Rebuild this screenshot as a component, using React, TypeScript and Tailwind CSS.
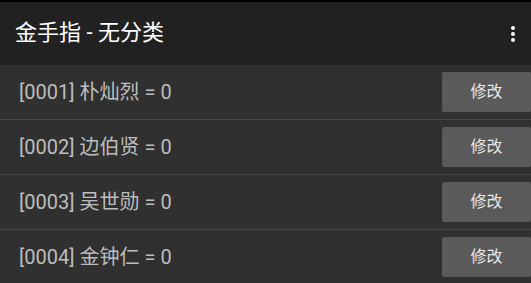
const rows = [
  { id: "0001", name: "朴灿烈", value: 0 },
  { id: "0002", name: "边伯贤", value: 0 },
  { id: "0003", name: "吴世勋", value: 0 },
  { id: "0004", name: "金钟仁", value: 0 },
];

const font = {
  fontFamily: '"Roboto", "Noto Sans CJK SC", sans-serif',
};

export default function App() {
  return (
    <div className="w-[531px] h-[283px] overflow-hidden bg-[#303030]" style={font}>
      <div className="h-[2px] bg-black" />
      <div className="h-[63px] bg-[#212121] flex items-center justify-between pl-[15px] pr-[16px]">
        <span className="text-[22px] text-white leading-none pb-[2px]">金手指 - 无分类</span>
        <div className="flex flex-col gap-[2px] items-center">
          <span className="w-[4px] h-[4px] rounded-full bg-white" />
          <span className="w-[4px] h-[4px] rounded-full bg-white" />
          <span className="w-[4px] h-[4px] rounded-full bg-white" />
        </div>
      </div>
      <div className="flex flex-col">
        {rows.map((r) => (
          <div key={r.id} className="h-[55px] flex items-center justify-between border-b border-[#474747] pl-[19px]">
            <span className="text-[20px] text-[#bdbdbd] leading-none">
              [{r.id}] {r.name} = {r.value}
            </span>
            <button className="w-[89px] h-[40px] rounded-[2px] bg-[#5a5a5a] text-[16px] text-[#e6e6e6]">
              修改
            </button>
          </div>
        ))}
      </div>
    </div>
  );
}
